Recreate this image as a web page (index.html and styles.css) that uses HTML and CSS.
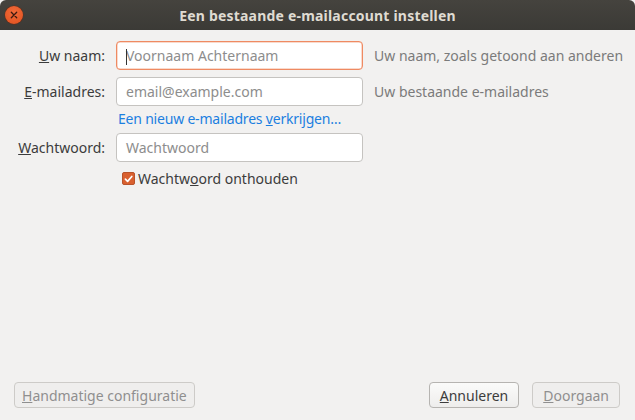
FILE: index.html
```html
<!DOCTYPE html>
<html>
<head>
<meta charset="utf-8">
<link rel="stylesheet" href="styles.css">
</head>
<body>
<div class="window">
  <div class="titlebar">
    <span class="close"><svg width="18" height="18" viewBox="0 0 18 18"><path d="M6.3 6.3 L11.7 11.7 M11.7 6.3 L6.3 11.7" stroke="#3c1a10" stroke-width="1.3" stroke-linecap="round"/></svg></span>
    <span class="title">Een bestaande e-mailaccount instellen</span>
  </div>
  <div class="content">
    <div class="form">
      <label class="label"><u>U</u>w naam:</label>
      <div class="input focused"><span class="caret"></span><span class="ph">Voornaam Achternaam</span></div>
      <span class="hint">Uw naam, zoals getoond aan anderen</span>

      <label class="label"><u>E</u>-mailadres:</label>
      <div class="input"><span class="ph">email@example.com</span></div>
      <span class="hint">Uw bestaande e-mailadres</span>

      <span></span>
      <a class="link">Een nieuw e-mailadres <u>v</u>erkrijgen…</a>
      <span></span>

      <label class="label"><u>W</u>achtwoord:</label>
      <div class="input"><span class="ph">Wachtwoord</span></div>
      <span></span>

      <span></span>
      <label class="check"><span class="box"><svg width="12" height="12" viewBox="0 0 12 12"><path d="M2.6 6.2 L5 8.6 L9.6 3.2" fill="none" stroke="#fff" stroke-width="1.8" stroke-linecap="round" stroke-linejoin="round"/></svg></span>Wachtw<u>o</u>ord onthouden</label>
      <span></span>
    </div>
    <div class="footer">
      <button class="btn disabled"><u>H</u>andmatige configuratie</button>
      <div class="right">
        <button class="btn wide"><u>A</u>nnuleren</button>
        <button class="btn wide disabled"><u>D</u>oorgaan</button>
      </div>
    </div>
  </div>
</div>
</body>
</html>
```
FILE: styles.css
```css
html, body {
  margin: 0;
  padding: 0;
}
body {
  width: 635px;
  height: 420px;
  overflow: hidden;
  background: #f2f1f0;
  font-family: "Noto Sans", "Open Sans", sans-serif;
  font-size: 14px;
  color: #3c3c3c;
}
.window {
  height: 420px;
  display: flex;
  flex-direction: column;
}
.titlebar {
  height: 30px;
  background: linear-gradient(#45433e, #3b3a36);
  border-radius: 6px 6px 0 0;
  position: relative;
  display: flex;
  align-items: center;
  justify-content: center;
  flex-shrink: 0;
}
.close {
  position: absolute;
  left: 5px;
  top: 6px;
  width: 18px;
  height: 18px;
  border-radius: 50%;
  background: radial-gradient(circle at 50% 35%, #f26b3a, #e0501d);
  box-shadow: 0 0 0 0.5px #6b2a14;
  display: flex;
}
.title {
  color: #dfdbd2;
  font-weight: bold;
  font-size: 14px;
  letter-spacing: 0.2px;
}
.content {
  flex: 1;
  display: flex;
  flex-direction: column;
  justify-content: space-between;
  padding: 11px 15px 12px 14px;
}
.form {
  display: grid;
  grid-template-columns: 91px 247px auto;
  column-gap: 11px;
  row-gap: 7px;
  align-items: center;
}
.label {
  text-align: right;
  color: #3c3c3c;
  white-space: nowrap;
}
.input {
  height: 29px;
  box-sizing: border-box;
  border: 1px solid #c5c3c0;
  border-radius: 4px;
  background: #fff;
  display: flex;
  align-items: center;
  padding-left: 9px;
  position: relative;
}
.input.focused {
  border-color: #ef8a62;
  box-shadow: inset 0 0 0 0.5px #f4b59b;
}
.caret {
  position: absolute;
  left: 9px;
  top: 7px;
  width: 1px;
  height: 16px;
  background: #333;
}
.ph {
  color: #8d8d8d;
}
.hint {
  color: #7b7b7b;
  white-space: nowrap;
}
.link {
  color: #1c7fe0;
  padding-left: 2px;
  margin-top: -4px;
  margin-bottom: -2px;
  white-space: nowrap;
  letter-spacing: -0.2px;
}
.check {
  display: flex;
  align-items: center;
  padding-left: 6px;
  white-space: nowrap;
}
.box {
  width: 13px;
  height: 13px;
  border-radius: 2px;
  background: #d9602f;
  border: 1px solid #b8532b;
  box-sizing: border-box;
  display: flex;
  align-items: center;
  justify-content: center;
  margin-right: 3px;
}
.footer {
  display: flex;
  justify-content: space-between;
  align-items: center;
}
.right {
  display: flex;
  gap: 13px;
}
.btn {
  font-family: inherit;
  font-size: 14px;
  height: 26px;
  padding: 0 7px;
  border: 1px solid #b6b4b1;
  border-radius: 4px;
  background: linear-gradient(#fbfbfa, #eeedec);
  color: #3c3c3c;
}
.btn.wide {
  padding: 0 10px;
}
.btn.disabled {
  color: #8f8f8f;
  background: #efeeed;
  border-color: #cdcbc8;
}
```
